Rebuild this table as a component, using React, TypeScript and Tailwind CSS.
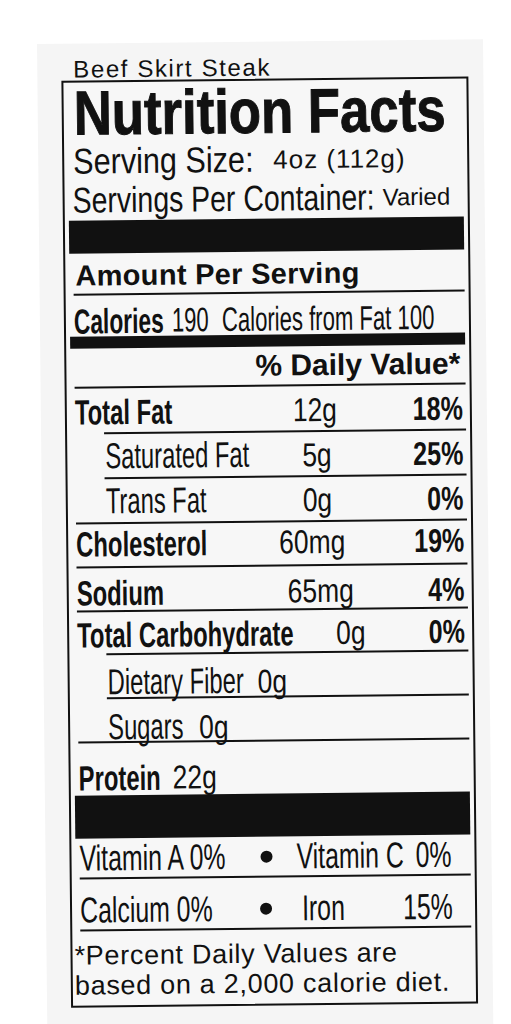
import React from 'react'

// squeezed type: Helvetica Condensed look, made from Liberation Sans
const boldName = 'origin-left scale-x-[0.68] text-[35px] font-bold'
const regName = 'origin-left scale-x-[0.66] text-[36px]'
const amt = 'origin-left scale-x-[0.8] text-[33px]'
const pctCls = 'origin-right scale-x-[0.76] text-[33px] font-bold'
const vit = 'origin-left scale-x-[0.69] text-[36px]'

function Fit({ box = '', text, children }: { box?: string; text: string; children: React.ReactNode }) {
  return (
    <span className={`flex shrink-0 whitespace-nowrap ${box}`}>
      <span className={`inline-block leading-none ${text}`}>{children}</span>
    </span>
  )
}

function Rule({ indent }: { indent?: boolean }) {
  return <div className={indent ? 'ml-[29px] h-[2px] bg-[#111]' : 'h-[2px] bg-[#111]'} />
}

interface NutrientProps {
  name: string
  amount?: string
  pct?: string
  bold?: boolean
  nameBox: string
  rowCls: string
}

function Nutrient({ name, amount, pct, bold, nameBox, rowCls }: NutrientProps) {
  return (
    <div className={`flex items-center leading-none ${rowCls}`}>
      <Fit box={nameBox} text={bold ? boldName : regName}>{name}</Fit>
      {amount && <Fit text={amt}>{amount}</Fit>}
      {pct && <Fit box="ml-auto mr-[3px] justify-end" text={pctCls}>{pct}</Fit>}
    </div>
  )
}

const Dot = () => <span className="h-[12px] w-[12px] shrink-0 rounded-full bg-[#111]" />

export default function App() {
  return (
    <div className="h-[1024px] overflow-hidden bg-white pl-[37px] pt-[44px] font-['Liberation_Sans',Arial,sans-serif] text-[#111]">
      <div className="h-[1040px] w-[446px] origin-top-left -rotate-[0.6deg] bg-[#f5f5f5] pl-[24px] pt-[13px]">
        <div className="flex h-[24px] items-center pl-[12px] pt-[2px] text-[24px] leading-none tracking-[1.6px]">
          Beef Skirt Steak
        </div>

        <div className="w-[407px] border-2 border-[#111] bg-[#f7f7f7] pl-[8px] pr-[4px]">
          <div className="flex h-[62px] items-center leading-none">
            <Fit box="ml-[2px]" text="origin-left scale-x-[0.85] text-[62px] font-bold [-webkit-text-stroke:1px_#111]">
              Nutrition Facts
            </Fit>
          </div>
          <div className="flex h-[33px] items-center leading-none">
            <Fit box="ml-[1px] w-[200px]" text="origin-left scale-x-[0.85] text-[36px]">Serving Size:</Fit>
            <span className="text-[26px] tracking-[1px]">4oz (112g)</span>
          </div>
          <div className="flex h-[43px] items-center pt-[2px] leading-none">
            <Fit box="w-[310px]" text="origin-left scale-x-[0.79] text-[36px]">Servings Per Container:</Fit>
            <span className="text-[24px]">Varied</span>
          </div>

          <div className="-ml-[4px] h-[33px] bg-[#111]" />

          <div className="flex h-[40px] items-center pl-[2px] pt-[4px] text-[29px] font-bold leading-none tracking-[0.3px]">
            Amount Per Serving
          </div>
          <Rule />
          <div className="flex h-[41px] items-center pt-[9px] leading-none">
            <Fit box="w-[98px]" text="origin-left scale-x-[0.65] text-[35px] font-bold">Calories</Fit>
            <Fit box="w-[50px]" text="origin-left scale-x-[0.65] text-[34px]">190</Fit>
            <Fit text="origin-left scale-x-[0.65] text-[34px]">Calories from Fat 100</Fit>
          </div>
          <div className="-ml-[4px] h-[12px] bg-[#111]" />

          <div className="flex h-[38px] items-center justify-end pr-[5px] text-[30px] font-bold leading-none">
            % Daily Value*
          </div>
          <Rule />
          <Nutrient name="Total Fat" amount="12g" pct="18%" bold nameBox="w-[218px]" rowCls="h-[44px] pt-[2px]" />
          <Rule indent />
          <Nutrient name="Saturated Fat" amount="5g" pct="25%" nameBox="ml-[30px] w-[197px]" rowCls="h-[43px] pt-[1px]" />
          <Rule indent />
          <Nutrient name="Trans Fat" amount="0g" pct="0%" nameBox="ml-[30px] w-[197px]" rowCls="h-[43px] pt-[1px]" />
          <Rule />
          <Nutrient name="Cholesterol" amount="60mg" pct="19%" bold nameBox="w-[203px]" rowCls="h-[42px] pb-[4px]" />
          <Rule />
          <Nutrient name="Sodium" amount="65mg" pct="4%" bold nameBox="w-[211px]" rowCls="h-[42px] pt-[6px]" />
          <Rule />
          <Nutrient name="Total Carbohydrate" amount="0g" pct="0%" bold nameBox="w-[259px]" rowCls="h-[41px] pt-[3px]" />
          <Rule indent />
          <Nutrient name="Dietary Fiber" amount="0g" nameBox="ml-[30px] w-[150px]" rowCls="h-[42px] pt-[12px]" />
          <Rule indent />
          <Nutrient name="Sugars" amount="0g" nameBox="ml-[30px] w-[91px]" rowCls="h-[42px] pt-[14px]" />
          <Rule />
          <Nutrient name="Protein" amount="22g" bold nameBox="w-[94px]" rowCls="h-[52px] pt-[16px]" />

          <div className="-ml-[4px] h-[43px] bg-[#111]" />

          <div className="flex h-[39px] items-center pt-[1px] leading-none">
            <Fit box="w-[181px]" text={vit}>Vitamin A 0%</Fit>
            <Dot />
            <Fit box="ml-[24px] w-[119px]" text={vit}>Vitamin C</Fit>
            <Fit text={vit}>0%</Fit>
          </div>
          <Rule />
          <div className="flex h-[50px] items-center pt-[12px] leading-none">
            <Fit box="w-[180px]" text={vit}>Calcium 0%</Fit>
            <Dot />
            <Fit box="ml-[30px] w-[101px]" text={vit}>Iron</Fit>
            <Fit text={vit}>15%</Fit>
          </div>
          <Rule />

          <div className="-ml-[6px] pb-[5px] pt-[9px] text-[27px] leading-[30px] tracking-[0.7px]">
            <div>*Percent Daily Values are</div>
            <div>based on a 2,000 calorie diet.</div>
          </div>
        </div>
      </div>
    </div>
  )
}
